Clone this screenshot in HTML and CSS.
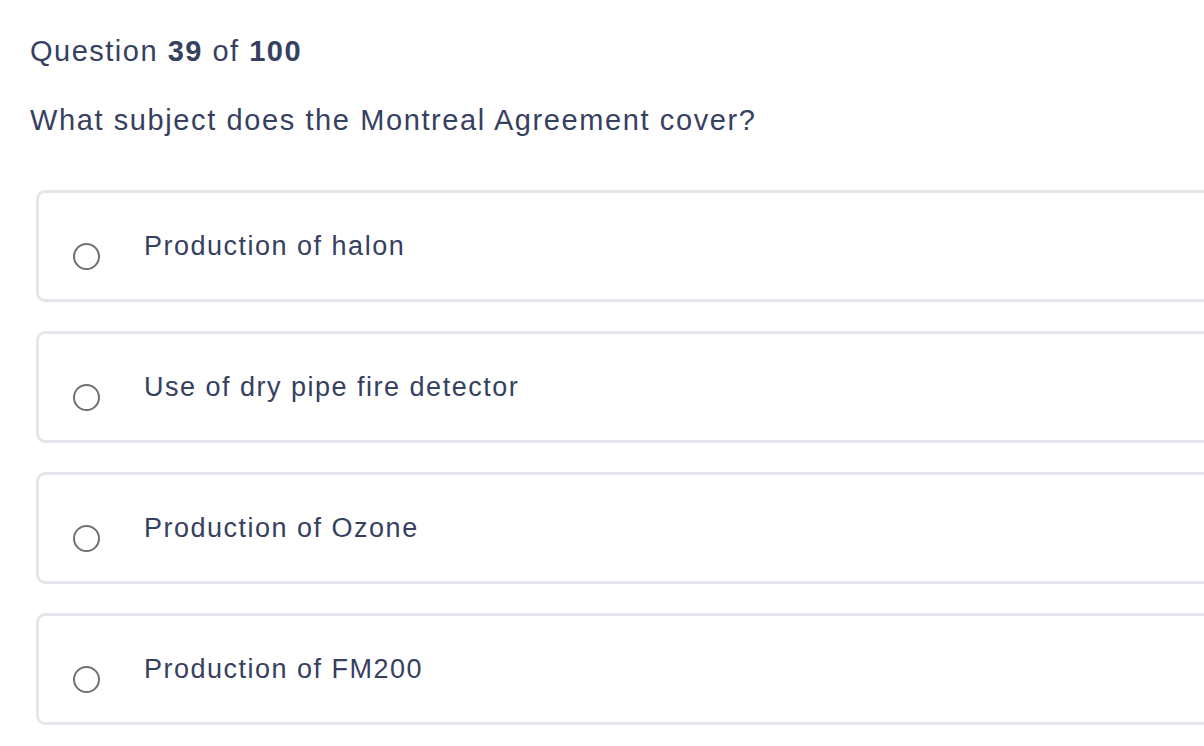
FILE: index.html
```html
<!DOCTYPE html>
<html lang="en">
<head>
<meta charset="utf-8">
<title>Question 39 of 100</title>
<link rel="stylesheet" href="styles.css">
</head>
<body>
<main class="quiz">
  <p class="counter">Question <strong>39</strong> of <strong>100</strong></p>
  <h1 class="question">What subject does the Montreal Agreement cover?</h1>
  <ul class="options">
    <li class="option"><span class="radio"></span><span class="label">Production of halon</span></li>
    <li class="option"><span class="radio"></span><span class="label">Use of dry pipe fire detector</span></li>
    <li class="option"><span class="radio"></span><span class="label">Production of Ozone</span></li>
    <li class="option"><span class="radio"></span><span class="label">Production of FM200</span></li>
  </ul>
</main>
</body>
</html>
```

FILE: styles.css
```css
html, body {
  margin: 0;
  padding: 0;
  background: #ffffff;
}
body {
  font-family: "Liberation Sans", Arial, sans-serif;
  color: #36405f;
}
.quiz {
  padding: 32px 0 0 30px;
  overflow: hidden;
}
.counter {
  margin: 0;
  font-size: 29px;
  line-height: 38px;
  letter-spacing: 1.5px;
}
.counter strong {
  font-weight: 700;
}
.question {
  margin: 31px 0 0 0;
  font-size: 29px;
  line-height: 38px;
  font-weight: 400;
  letter-spacing: 1.6px;
}
.options {
  list-style: none;
  margin: 51px -20px 0 6px;
  padding: 0;
  display: flex;
  flex-direction: column;
  gap: 29px;
}
.option {
  box-sizing: border-box;
  height: 112px;
  border: 3px solid #e4e6eb;
  border-radius: 9px;
  display: flex;
  align-items: center;
  padding-left: 34px;
}
.radio {
  box-sizing: border-box;
  width: 27px;
  height: 27px;
  border: 2px solid #707070;
  border-radius: 50%;
  margin-top: 20px;
  flex: none;
}
.label {
  margin-left: 44px;
  font-size: 27px;
  line-height: 32px;
  letter-spacing: 1.5px;
}
```
